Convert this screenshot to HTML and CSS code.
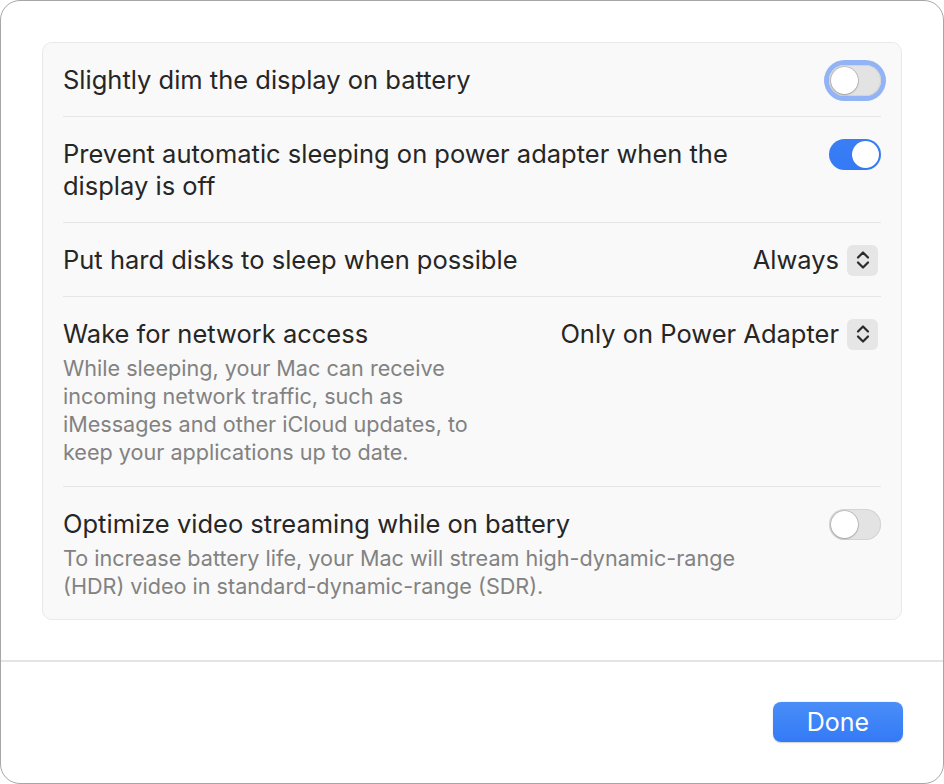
FILE: index.html
```html
<!DOCTYPE html>
<html lang="en">
<head>
<meta charset="utf-8">
<title>Energy Options</title>
<link rel="stylesheet" href="styles.css">
</head>
<body>
<div class="window">
  <div class="content">
    <div class="card">
      <div class="row">
        <div class="text"><div class="title">Slightly dim the display on battery</div></div>
        <div class="control"><span class="focus"><span class="switch off"><span class="knob"></span></span></span></div>
      </div>
      <div class="row">
        <div class="text"><div class="title">Prevent automatic sleeping on power adapter when the display is off</div></div>
        <div class="control"><span class="switch on"><span class="knob"></span></span></div>
      </div>
      <div class="row">
        <div class="text"><div class="title">Put hard disks to sleep when possible</div></div>
        <div class="control popup"><span class="value">Always</span>
          <span class="stepper"><svg width="16" height="22" viewBox="0 0 16 22"><path d="M3 8.5 L8 3.5 L13 8.5 M3 13.5 L8 18.5 L13 13.5" fill="none" stroke="#2a2a2a" stroke-width="2.2" stroke-linecap="round" stroke-linejoin="round"/></svg></span>
        </div>
      </div>
      <div class="row">
        <div class="text">
          <div class="title">Wake for network access</div>
          <div class="sub">While sleeping, your Mac can receive incoming network traffic, such as iMessages and other iCloud updates, to keep your applications up to date.</div>
        </div>
        <div class="control popup"><span class="value">Only on Power Adapter</span>
          <span class="stepper"><svg width="16" height="22" viewBox="0 0 16 22"><path d="M3 8.5 L8 3.5 L13 8.5 M3 13.5 L8 18.5 L13 13.5" fill="none" stroke="#2a2a2a" stroke-width="2.2" stroke-linecap="round" stroke-linejoin="round"/></svg></span>
        </div>
      </div>
      <div class="row">
        <div class="text">
          <div class="title">Optimize video streaming while on battery</div>
          <div class="sub">To increase battery life, your Mac will stream high-dynamic-range (HDR) video in standard-dynamic-range (SDR).</div>
        </div>
        <div class="control"><span class="switch off"><span class="knob"></span></span></div>
      </div>
    </div>
  </div>
  <div class="footer">
    <button class="done">Done</button>
  </div>
</div>
</body>
</html>
```
FILE: styles.css
```css
* { box-sizing: border-box; }
html, body { margin: 0; padding: 0; background: #ffffff; }
body { font-family: Inter, "Noto Sans", sans-serif; color: #262626; }

.window {
  width: 944px;
  height: 784px;
  border: 1px solid #a6a6a6;
  border-radius: 20px;
  background: #ffffff;
  display: flex;
  flex-direction: column;
  overflow: hidden;
}

.content {
  padding: 41px 41px 40px 41px;
  border-bottom: 2px solid #e4e4e4;
}

.card {
  background: #f9f9f9;
  border: 1px solid #e9e9e9;
  border-radius: 10px;
  padding: 0 20px;
}

.row {
  display: flex;
  align-items: flex-start;
  gap: 50px;
  padding: 21px 0 20px;
  border-bottom: 1px solid #e6e6e6;
}
.row:last-child { border-bottom: none; padding-bottom: 19px; }

.text { flex: 1; min-width: 0; }
.title {
  font-size: 25.5px;
  line-height: 32px;
  color: #262626;
}
.sub {
  font-size: 21.6px;
  line-height: 28px;
  color: #828282;
  margin-top: 4px;
}

.control {
  flex: none;
  display: flex;
  align-items: center;
  height: 32px;
}

.focus {
  display: inline-flex;
  padding: 5px;
  margin: -5px;
  border-radius: 21px;
  background: #92b3f5;
}

.switch {
  position: relative;
  display: inline-block;
  width: 52px;
  height: 31px;
  border-radius: 16px;
}
.switch.off {
  background: #e3e3e3;
  box-shadow: inset 0 0 0 1px #d4d4d4;
}
.switch.on {
  background: linear-gradient(#3a7ef5, #347af6);
}
.knob {
  position: absolute;
  top: 2px;
  width: 27px;
  height: 27px;
  border-radius: 50%;
  background: #ffffff;
  box-shadow: 0 0 0 0.8px rgba(0,0,0,0.18), 0 1px 2px rgba(0,0,0,0.18);
}
.switch.off .knob { left: 2px; }
.switch.on .knob { right: 2px; box-shadow: 0 0 1px rgba(0,0,0,0.2); }

.popup { gap: 8px; margin-right: 3px; }
.value { font-size: 25.5px; line-height: 32px; color: #262626; }
.stepper {
  width: 31px;
  height: 31px;
  border-radius: 6px;
  background: #e6e6e6;
  display: flex;
  align-items: center;
  justify-content: center;
}

.footer {
  flex: 1;
  display: flex;
  justify-content: flex-end;
  align-items: flex-start;
  padding: 40px 40px 0 0;
}

.done {
  width: 130px;
  height: 40px;
  border: none;
  border-radius: 8px;
  background: linear-gradient(#4a8ef8, #337af6);
  color: #ffffff;
  font-family: Inter, "Noto Sans", sans-serif;
  font-size: 25px;
  box-shadow: 0 0.5px 1.5px rgba(0,0,0,0.2);
  padding: 0;
}
```
